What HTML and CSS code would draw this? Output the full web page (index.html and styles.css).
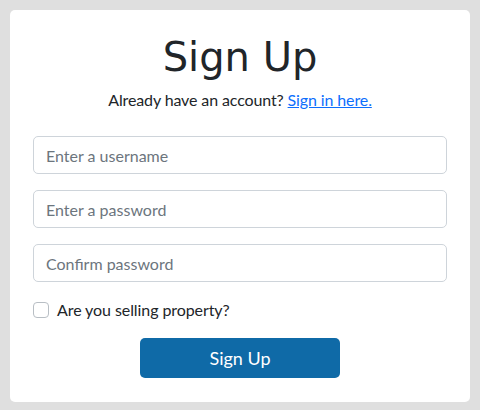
FILE: index.html
```html
<!DOCTYPE html>
<html lang="en">
<head>
<meta charset="utf-8">
<title>Sign Up</title>
<link rel="stylesheet" href="styles.css">
</head>
<body>
<main class="card">
  <h1 class="title">Sign Up</h1>
  <p class="subtitle">Already have an account? <a href="#" class="link">Sign in here.</a></p>
  <form class="form">
    <input class="field" type="text" placeholder="Enter a username">
    <input class="field" type="password" placeholder="Enter a password">
    <input class="field" type="password" placeholder="Confirm password">
    <label class="check">
      <input class="check-box" type="checkbox">
      <span>Are you selling property?</span>
    </label>
    <button class="btn" type="button">Sign Up</button>
  </form>
</main>
</body>
</html>
```

FILE: styles.css
```css
html, body {
  margin: 0;
  padding: 0;
}
body {
  background: #dfdfdf;
  padding: 10px;
  font-family: Lato, "Open Sans", sans-serif;
  color: #212529;
  height: 410px;
  box-sizing: border-box;
}
.card {
  background: #fff;
  border-radius: 5px;
  width: 460px;
  height: 392px;
  box-sizing: border-box;
  padding: 22px 23px 0;
  display: flex;
  flex-direction: column;
}
.title {
  margin: 0;
  text-align: center;
  font-family: "DejaVu Sans", sans-serif;
  font-weight: 400;
  font-size: 40px;
  line-height: 50px;
  color: #212529;
}
.subtitle {
  margin: 6px 0 0;
  text-align: center;
  font-size: 16px;
  line-height: 24px;
  letter-spacing: -0.12px;
}
.link {
  color: #0d6efd;
  text-decoration: underline;
}
.form {
  margin-top: 24px;
  display: flex;
  flex-direction: column;
  gap: 16px;
}
.field {
  display: block;
  width: 100%;
  box-sizing: border-box;
  height: 38px;
  padding: 6px 12px;
  border: 1px solid #ced4da;
  border-radius: 5px;
  font-family: Lato, sans-serif;
  font-size: 16px;
  color: #212529;
  outline: none;
}
.field::placeholder {
  color: #6c757d;
  opacity: 1;
}
.check {
  display: flex;
  align-items: center;
  gap: 8px;
  font-size: 16px;
  line-height: 24px;
  letter-spacing: -0.08px;
}
.check-box {
  appearance: none;
  margin: 0;
  width: 16px;
  height: 16px;
  border: 1px solid #b8bec4;
  border-radius: 4px;
  background: #fff;
}
.btn {
  align-self: center;
  width: 200px;
  height: 40px;
  background: #0f6aa7;
  color: #fff;
  border: none;
  border-radius: 5px;
  font-family: Lato, sans-serif;
  font-size: 18px;
}
```
